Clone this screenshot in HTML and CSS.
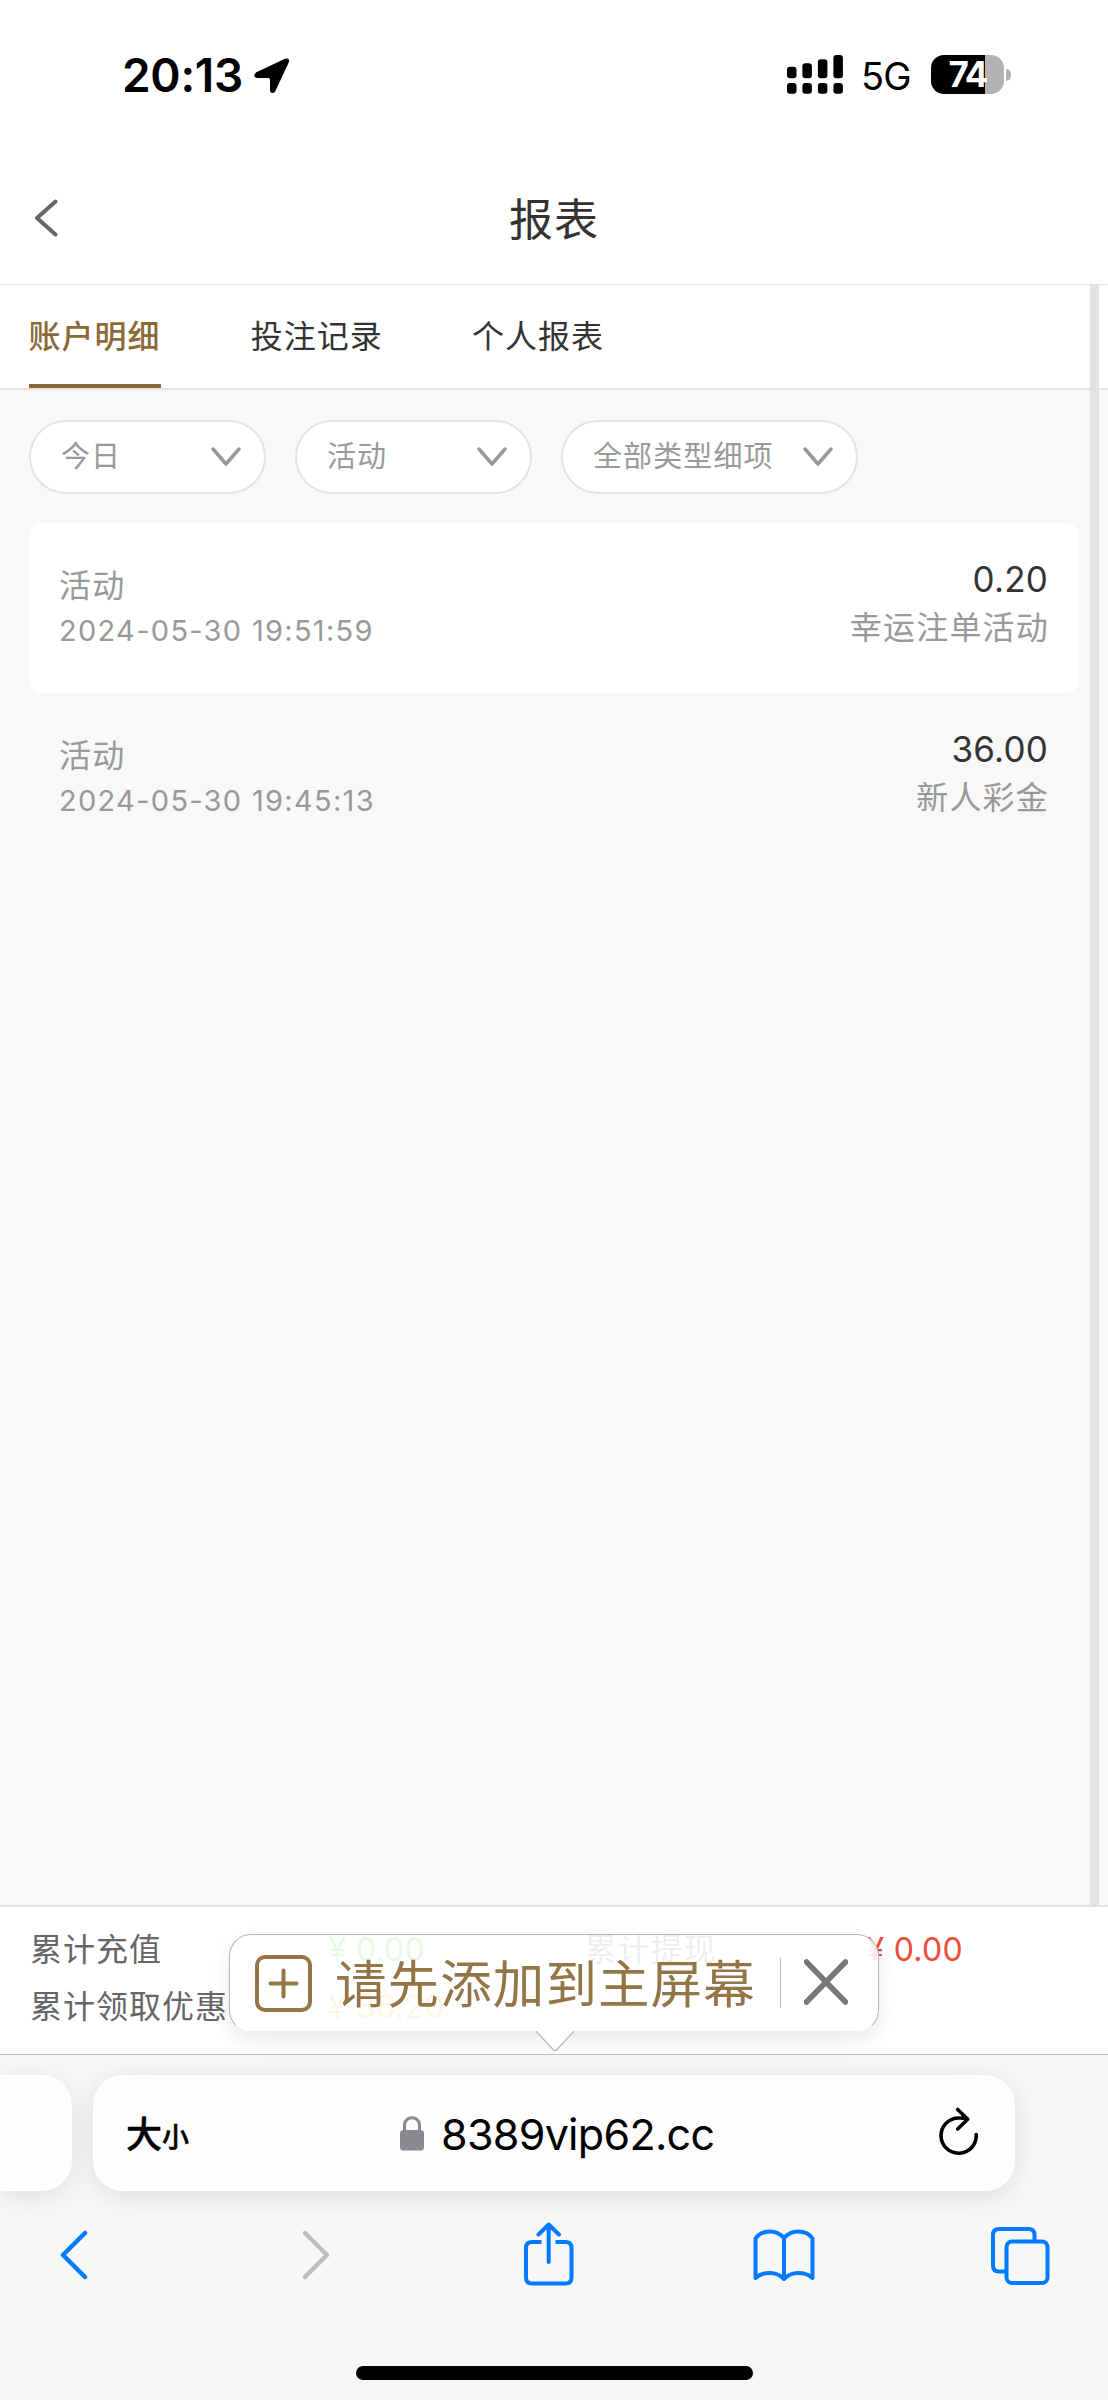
FILE: index.html
```html
<!DOCTYPE html>
<html lang="zh-CN">
<head>
<meta charset="utf-8">
<title>报表</title>
<link rel="stylesheet" href="styles.css">
</head>
<body>
<div class="screen">
  <div class="status">
    <span class="time">20:13</span>
    <svg class="location" width="36" height="36" viewBox="0 0 36 36"><path d="M2.300 14.200 31 0.800Q36.200-.8 34.700 4.500L21.300 33.200Q18.500 37 16 33.200V21.600Q16 20 14.400 20H2.700Q-2.200 18.300 2.300 14.200Z"/></svg>
    <svg class="signal" width="57" height="39" viewBox="0 0 57 39">
      <rect x="0" y="11.700" width="9.500" height="11.500" rx="3"/><rect x="15.400" y="8.300" width="9.500" height="15" rx="3"/><rect x="30.900" y="4.200" width="9.500" height="19" rx="3"/><rect x="46.400" y="0" width="9.500" height="23.200" rx="3"/>
      <rect x="0" y="28" width="9.500" height="10.700" rx="3"/><rect x="15.400" y="28" width="9.500" height="10.700" rx="3"/><rect x="30.900" y="28" width="9.500" height="10.700" rx="3"/><rect x="46.400" y="28" width="9.500" height="10.700" rx="3"/>
    </svg>
    <span class="network">5G</span>
    <span class="battery">74</span>
    <span class="battery-tip"></span>
  </div>
  <header class="header">
    <svg width="24" height="38" viewBox="0 0 24 38"><path d="M21.500 2.500 3 19 21.500 35.500"/></svg>
    <h1>报表</h1>
  </header>
  <main class="content">
    <nav class="tabs">
      <span class="tab active">账户明细</span><span class="tab">投注记录</span><span class="tab">个人报表</span>
    </nav>
    <div class="filters">
      <div class="pill"><span>今日</span><svg width="30" height="20" viewBox="0 0 30 20"><path d="M2 2 15 17 28 2"/></svg></div>
      <div class="pill"><span>活动</span><svg width="30" height="20" viewBox="0 0 30 20"><path d="M2 2 15 17 28 2"/></svg></div>
      <div class="pill wide"><span>全部类型细项</span><svg width="30" height="20" viewBox="0 0 30 20"><path d="M2 2 15 17 28 2"/></svg></div>
    </div>
    <div class="record card">
      <div class="info"><div class="kind">活动</div><div class="date">2024-05-30 19:51:59</div></div>
      <div class="sum"><div class="amount">0.20</div><div class="kind">幸运注单活动</div></div>
    </div>
    <div class="record">
      <div class="info"><div class="kind">活动</div><div class="date">2024-05-30 19:45:13</div></div>
      <div class="sum"><div class="amount">36.00</div><div class="kind">新人彩金</div></div>
    </div>
    <div class="scrollbar"></div>
  </main>
  <section class="summary">
    <span>累计充值</span><span class="money green">¥ 0.00</span><span>累计提现</span><span class="money red">¥ 0.00</span>
    <span>累计领取优惠</span><span class="money orange">¥ 36.20</span>
    <div class="banner">
      <svg class="add" width="57" height="57" viewBox="0 0 57 57"><rect x="2" y="2" width="53" height="53" rx="8"/><path d="M28.500 15.500v26M15.500 28.500h26"/></svg>
      <span class="hint">请先添加到主屏幕</span>
      <span class="divider"></span>
      <svg class="close" width="44" height="46" viewBox="0 0 44 46"><path d="M2.500 3 41.500 43M41.500 3 2.500 43"/></svg>
      <svg class="pointer" width="38" height="21" viewBox="0 0 38 21"><path d="M0 0 17 18.500Q19 20.500 21 18.500L38 0"/></svg>
    </div>
  </section>
  <footer class="browser">
    <div class="address-row">
      <div class="prev-page"></div>
      <div class="address">
        <span class="size-big">大</span><span class="size-small">小</span>
        <svg class="lock" width="24" height="35" viewBox="0 0 24 35"><rect x="0" y="14" width="24" height="20.500" rx="3.500"/><path d="M4.500 15V9.500C4.500 -1 19.500 -1 19.500 9.500V15"/></svg>
        <span class="url">8389vip62.cc</span>
        <svg class="reload" width="40" height="48" viewBox="0 0 40 48"><path d="M37.200 27.500A17.600 17.600 0 1 1 20 11Q25 10.800 28.500 12M18.700 2.500 28.700 12.200 18.700 22"/></svg>
      </div>
    </div>
    <div class="tools">
      <svg class="back" width="28" height="50" viewBox="0 0 28 50"><path d="M25 3 3 25 25 47"/></svg>
      <svg class="forward" width="28" height="50" viewBox="0 0 28 50"><path d="M3 3 25 25 3 47"/></svg>
      <svg class="share" width="50" height="64" viewBox="0 0 50 64"><path class="butt" d="M17.500 20H8Q2 20 2 26V55.500Q2 61.500 8 61.500H41.500Q47.500 61.500 47.500 55.500V26Q47.500 20 41.500 20H31.500"/><path d="M24.700 3V40M14.500 12.500 24.700 2.500 34.900 12.500"/></svg>
      <svg class="book" width="62" height="54" viewBox="0 0 62 54"><path d="M31 10Q25 3.500 17 3.500Q7 3.500 2.500 10.500V50Q8 45 17 45Q25 45 31 51Q37 45 45 45Q54 45 59.500 50V10.500Q55 3.500 45 3.500Q37 3.500 31 10V51"/></svg>
      <svg class="pages" width="59" height="58" viewBox="0 0 59 58"><path class="butt" d="M14 44.500H8Q2 44.500 2 38.500V8Q2 2 8 2H37.500Q43.500 2 43.500 8V15"/><rect x="15.500" y="14.500" width="41" height="41.500" rx="5.500"/></svg>
    </div>
    <div class="home"></div>
  </footer>
</div>
</body>
</html>
```

FILE: styles.css
```css
* { box-sizing: border-box; }
body { margin: 0; font-family: Inter, "Noto Sans CJK SC", sans-serif; background: #fff; }
svg { flex: none; display: block; fill: none; stroke-linecap: round; stroke-linejoin: round; }
.screen { width: 1108px; height: 2400px; overflow: hidden; display: flex; flex-direction: column; color: #333; }
.screen > * { flex: none; }

.status { height: 150px; padding-left: 122px; display: flex; align-items: flex-start; color: #000; }
.time { width: 132px; padding-top: 47px; font-size: 46px; line-height: 56px; font-weight: 600; letter-spacing: -0.300px; white-space: nowrap; }
.location { margin-top: 58px; fill: #000; }
.signal { margin: 55px 0 0 496.700px; fill: #000; }
.network { width: 69px; margin: 52px 0 0 17.300px; font-size: 38px; line-height: 48px; letter-spacing: -0.800px; }
.battery { width: 73px; height: 39px; margin: 55px 0 0 1px; border-radius: 13px; background: linear-gradient(90deg, #000 54px, #b2b2b2 54px); color: #fff; font-size: 35px; line-height: 39px; font-weight: 700; text-align: center; letter-spacing: -2px; }
.battery-tip { width: 4.500px; height: 12px; margin: 69px 0 0 2.500px; border-radius: 0 5px 5px 0; background: #b2b2b2; }

.header { height: 135px; border-bottom: 1px solid #e2e2e2; padding: 49px 0 0 34px; display: flex; align-items: flex-start; }
.header svg { stroke: #666; stroke-width: 4; }
h1 { margin: -9px 58px 0 0; flex: 1; text-align: center; font-weight: 400; font-size: 44px; line-height: 60px; letter-spacing: 1px; }

.content { position: relative; height: 1620px; background: #f8f8f8; }
.scrollbar { position: absolute; top: 0; right: 9px; width: 9px; height: 1620px; background: #e2e2e2; }
.tabs { height: 105px; padding-left: 28.500px; background: #fff; border-bottom: 2px solid #e2e2e2; display: flex; gap: 89.200px; }
.tab { width: 132px; height: 103px; padding: 27.500px 0 0 1px; font-size: 32px; line-height: 48px; letter-spacing: 1px; white-space: nowrap; }
.tab.active { padding-left: 0; color: #8b6a37; font-weight: 500; background: linear-gradient(#8b6a37, #8b6a37) bottom / 100% 4px no-repeat; }

.filters { display: flex; gap: 29px; padding: 30px 0 0 29px; }
.pill { width: 237px; height: 74px; border: 2.500px solid #e3e3e3; border-radius: 37px; background: #fff; padding: 0 23px 4px 30px; display: flex; align-items: center; justify-content: space-between; font-size: 29px; letter-spacing: 1.100px; color: #999; white-space: nowrap; }
.pill span { margin-top: -2px; }
.pill.wide { width: 297px; }
.pill svg { stroke: #999; stroke-width: 3.500; margin-top: 3px; }

.record { width: 1050px; height: 170px; margin-left: 29px; padding: 0 31px 0 30px; display: flex; justify-content: space-between; color: #999; }
.record.card { margin-top: 29px; background: #fff; border-radius: 14px; }
.kind { font-size: 32px; line-height: 48px; letter-spacing: 1.200px; }
.info { padding-top: 39px; }
.date { font-size: 29px; line-height: 36px; letter-spacing: 1.300px; margin-top: 3px; }
.sum { padding-top: 34px; text-align: right; }
.amount { font-size: 35px; line-height: 44px; letter-spacing: 0.200px; color: #333; }
.sum .kind { margin-top: 2.500px; margin-right: -1px; }

.summary { position: relative; height: 149px; border-top: 2px solid #e2e2e2; background: #fff; display: grid; grid-template-columns: 298.500px 256px 282px 1fr; grid-auto-rows: 56.500px; padding: 15px 0 0 30px; font-size: 32px; line-height: 56px; letter-spacing: 1px; color: #666; white-space: nowrap; }
.money { letter-spacing: 0.300px; }
.green { color: #2ec52e; }
.red { color: #ef4b39; }
.orange { color: #ffa010; }
.banner { position: absolute; left: 229px; top: 27px; width: 650px; height: 98px; border: 1px solid #b4b4b4; border-bottom-color: #eee; border-radius: 22px; background: rgba(255,255,255,.89); box-shadow: 0 8px 20px rgba(0,0,0,.09); display: flex; align-items: center; padding-left: 25px; }
.add { stroke: #947646; stroke-width: 4; }
.hint { width: 445px; margin: 2px 0 0 23px; color: #947646; font-size: 51.500px; letter-spacing: 1.100px; line-height: 74px; }
.divider { width: 1px; height: 50px; background: #b9b9b9; }
.close { margin: -3px 0 0 22.500px; stroke: #777; stroke-width: 5.500; }
.pointer { position: absolute; left: 305.500px; top: 96px; stroke: #bbb; stroke-width: 1.300; fill: #fff; }

.browser { height: 346px; border-top: 1px solid #b9b9b9; background: #f7f7f7; }
.address-row { height: 137px; padding-top: 20px; display: flex; gap: 21px; }
.prev-page { width: 72px; height: 116px; border-radius: 0 30px 30px 0; background: #fdfdfd; box-shadow: 0 5px 28px rgba(0,0,0,.1); }
.address { width: 922px; height: 116px; border-radius: 30px; background: #fdfdfd; box-shadow: 0 5px 28px rgba(0,0,0,.11); display: flex; align-items: flex-start; color: #000; }
.size-big { width: 36px; margin: 32.500px 0 0 33px; font-size: 36px; line-height: 54px; font-weight: 500; -webkit-text-stroke: 0.500px #000; }
.size-small { width: 28px; margin-top: 40px; font-size: 27px; line-height: 46px; font-weight: 500; -webkit-text-stroke: 0.500px #000; }
.lock { margin: 41px 0 0 210px; fill: #8a898f; }
.lock path { stroke: #8a898f; stroke-width: 3; fill: none; }
.url { width: 300px; margin: 32px 0 0 17px; font-size: 43px; line-height: 54px; letter-spacing: -0.700px; white-space: nowrap; }
.reload { margin: 32px 0 0 198px; stroke: #000; stroke-width: 3.600; }
.tools { height: 154px; padding: 30px 58px 0 60px; display: flex; align-items: flex-start; stroke: #007aff; stroke-width: 4; }
.butt { stroke-linecap: butt; }
.back { margin-top: 8px; stroke-width: 4.500; }
.forward { margin: 8px 0 0 214px; stroke: #bfbfbf; stroke-width: 4.500; }
.share { margin-left: 194px; }
.book { margin: 6px 0 0 179px; }
.pages { margin: 5px 0 0 176px; }
.home { width: 397px; height: 14px; margin: 20px auto 0; border-radius: 7px; background: #000; }
```
